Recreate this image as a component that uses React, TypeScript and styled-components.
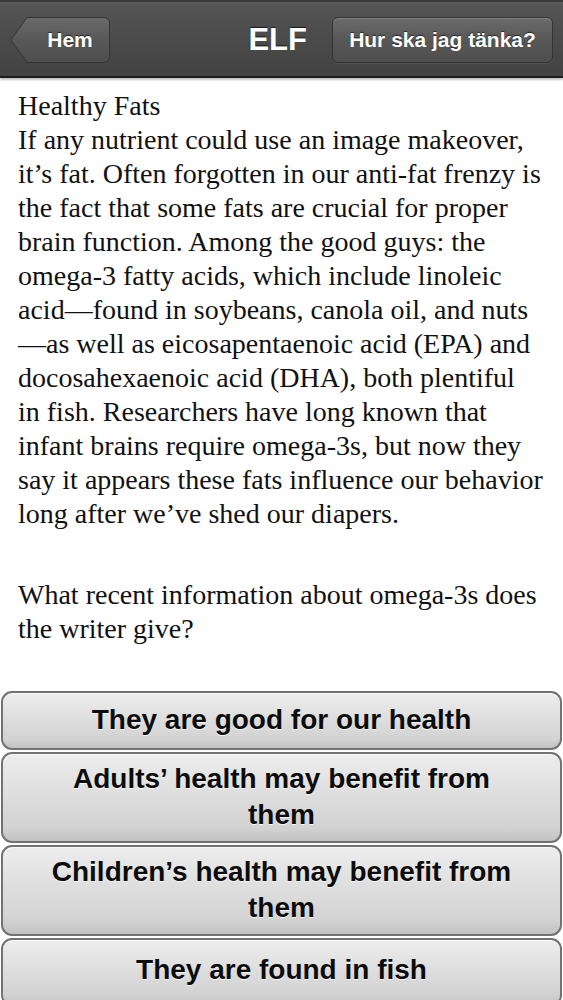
import styled, { createGlobalStyle } from 'styled-components'

const GlobalStyle = createGlobalStyle`
  html, body {
    margin: 0;
    padding: 0;
    background: #fff;
  }
  body {
    width: 563px;
    overflow: hidden;
  }
`

// 画面全体
const Screen = styled.div`
  width: 563px;
  height: 1000px;
  display: flex;
  flex-direction: column;
  background: #fff;
  overflow: hidden;
`

// ナビゲーションバー
const NavBar = styled.header`
  height: 78px;
  flex-shrink: 0;
  box-sizing: border-box;
  display: flex;
  align-items: center;
  padding: 2px 10px 0;
  background: linear-gradient(#5a5a5a 0px, #545454 4px, #4a4a4a 40px, #424242 76px);
  border-top: 2px solid #3a3a3a;
  border-bottom: 2px solid #1e1e1e;
  box-shadow: 0 2px 2px rgba(0, 0, 0, 0.25);
  position: relative;
  z-index: 1;
`

const BackButton = styled.button`
  position: relative;
  width: 100px;
  height: 46px;
  border: none;
  padding: 0 0 0 20px;
  background: none;
  cursor: pointer;
  font-family: 'Liberation Sans', Arial, sans-serif;
  font-weight: bold;
  font-size: 21px;
  color: #fff;
  text-shadow: 0 -1px 1px rgba(0, 0, 0, 0.6);

  svg {
    position: absolute;
    inset: 0;
  }

  span {
    position: relative;
  }
`

const Title = styled.h1`
  margin: 0 25px 0 auto;
  font-family: 'Liberation Sans', Arial, sans-serif;
  font-weight: bold;
  font-size: 31px;
  color: #fff;
  text-shadow: 0 -1px 1px rgba(0, 0, 0, 0.7);
`

const HelpButton = styled.button`
  width: 221px;
  height: 46px;
  border-radius: 6px;
  border: 1px solid #333;
  background: linear-gradient(#6a6a6a, #585858 50%, #4e4e4e);
  box-shadow: inset 0 1px 0 rgba(255, 255, 255, 0.18), 0 1px 0 rgba(255, 255, 255, 0.08);
  font-family: 'Liberation Sans', Arial, sans-serif;
  font-weight: bold;
  font-size: 21px;
  color: #fff;
  text-shadow: 0 -1px 1px rgba(0, 0, 0, 0.6);
  cursor: pointer;
`

// 本文
const Article = styled.div`
  flex-shrink: 0;
  padding: 11px 8px 0 18px;
  font-family: 'Liberation Serif', 'Times New Roman', serif;
  font-size: 28px;
  line-height: 34px;
  color: #111;
`

const Paragraph = styled.p<{ $gap?: number }>`
  margin: 0 0 ${({ $gap }) => $gap ?? 0}px 0;
  white-space: nowrap;
`

// 回答ボタン
const Answers = styled.div`
  flex-shrink: 0;
  margin-top: 45px;
  display: flex;
  flex-direction: column;
  gap: 2px;
  padding: 0 1px;
`

const AnswerButton = styled.button`
  width: 100%;
  min-height: 59px;
  box-sizing: border-box;
  padding: 7px 46px 8px;
  border: 2px solid #727272;
  border-radius: 11px;
  background: linear-gradient(#ededed, #e0e0e0 40%, #d2d2d2 85%, #c2c2c2);
  box-shadow: inset 0 1px 0 #fafafa;
  font-family: 'Liberation Sans', Arial, sans-serif;
  font-weight: bold;
  font-size: 28px;
  line-height: 36px;
  color: #0c0c0c;
  text-shadow: 0 1px 0 rgba(255, 255, 255, 0.8);
  cursor: pointer;

  /* 最後のボタンは画面下で切れている */
  &:last-child {
    min-height: 68px;
    padding-bottom: 12px;
  }
`

const answers = [
  'They are good for our health',
  'Adults\u2019 health may benefit from them',
  'Children\u2019s health may benefit from them',
  'They are found in fish',
]

const lines = [
  'Healthy Fats',
  'If any nutrient could use an image makeover,',
  'it\u2019s fat. Often forgotten in our anti-fat frenzy is',
  'the fact that some fats are crucial for proper',
  'brain function. Among the good guys: the',
  'omega-3 fatty acids, which include linoleic',
  'acid\u2014found in soybeans, canola oil, and nuts',
  '\u2014as well as eicosapentaenoic acid (EPA) and',
  'docosahexaenoic acid (DHA), both plentiful',
  'in fish. Researchers have long known that',
  'infant brains require omega-3s, but now they',
  'say it appears these fats influence our behavior',
  'long after we\u2019ve shed our diapers.',
]

const App = () => {
  return (
    <>
      <GlobalStyle />
      <Screen>
        <NavBar>
          <BackButton>
            <svg width="100" height="46" viewBox="0 0 100 46">
              <defs>
                <linearGradient id="backGrad" x1="0" y1="0" x2="0" y2="1">
                  <stop offset="0" stopColor="#6a6a6a" />
                  <stop offset="0.5" stopColor="#585858" />
                  <stop offset="1" stopColor="#4e4e4e" />
                </linearGradient>
              </defs>
              <path
                d="M17 0.5 H94 A5.5 5.5 0 0 1 99.5 6 V40 A5.5 5.5 0 0 1 94 45.5 H17 L0.8 23 Z"
                fill="url(#backGrad)"
                stroke="#333"
                strokeWidth="1"
              />
            </svg>
            <span>Hem</span>
          </BackButton>
          <Title>ELF</Title>
          <HelpButton>Hur ska jag tänka?</HelpButton>
        </NavBar>
        <Article>
          <Paragraph $gap={47}>
            {lines.map((l, i) => (
              <span key={i}>
                {l}
                <br />
              </span>
            ))}
          </Paragraph>
          <Paragraph>
            What recent information about omega-3s does
            <br />
            the writer give?
          </Paragraph>
        </Article>
        <Answers>
          {answers.map((a, i) => (
            <AnswerButton key={i}>{a}</AnswerButton>
          ))}
        </Answers>
      </Screen>
    </>
  )
}

export default App
